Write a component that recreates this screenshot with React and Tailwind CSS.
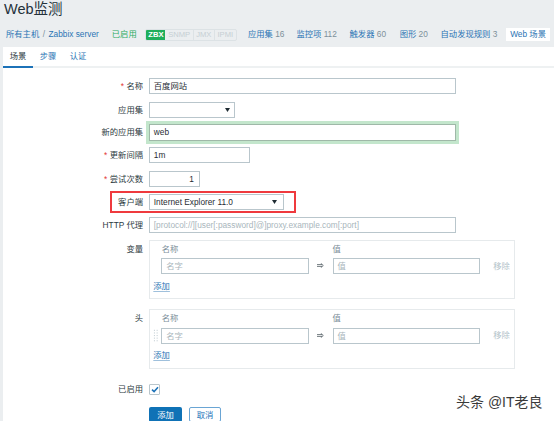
const BLUE = "text-[#2a74b4]";

function Caret() {
  return (
    <svg width="5" height="4" viewBox="0 0 5 4" className="shrink-0">
      <polygon points="0,0 5,0 2.5,4" fill="#1f2c33" />
    </svg>
  );
}

function Row({ label, required, className, children }) {
  return (
    <div className={"flex items-start " + className}>
      <div className="w-[140px] shrink-0 text-right h-[16px] leading-[16px] text-[#2c3a41]">
        {required && <span className="text-[#e33734] mr-[2.5px]">*</span>}
        {label}
      </div>
      <div className="ml-[6.3px]">{children}</div>
    </div>
  );
}

function Box({ label, className, withHandle }) {
  return (
    <div className={"flex items-start " + className}>
      <div className="w-[140px] shrink-0 text-right h-[18px] leading-[18px] text-[#2c3a41]">{label}</div>
      <div className="ml-[6.3px] w-[365.4px] border border-[#e6eaec] pl-[3px] pb-[4.3px]">
        <div className="flex h-[16px] leading-[16px] text-[#7b8e98]">
          <div className="w-[8px]" />
          <div className="w-[147.7px] pl-[0.5px]">名称</div>
          <div className="w-[23.6px]" />
          <div>值</div>
        </div>
        <div className={"flex items-center h-[16px] " + (withHandle ? "mt-[1.4px]" : "mt-[1px]")}>
          <div className="w-[8px] flex items-center">
            {withHandle && (
              <svg width="5" height="13" viewBox="0 0 5 13">
                {[0.8, 3.4, 6, 8.6, 11.2].map((y) =>
                  [0.9, 3.6].map((x) => <rect key={x + "-" + y} x={x} y={y} width="1.1" height="1.1" fill="#c9d3d8" />)
                )}
              </svg>
            )}
          </div>
          <div className="w-[147.7px] h-[16px] border border-[#b9c6cc] pl-[4px] leading-[14px] text-[#a9b6bc]">名字</div>
          <div className="w-[23.6px] flex justify-center">
            <svg width="7" height="5" viewBox="0 0 7 5">
              <path d="M0 1.6 H5 M0 3.4 H5 M3.8 0.3 L6.3 2.5 L3.8 4.7" fill="none" stroke="#4f5b61" strokeWidth="0.8" />
            </svg>
          </div>
          <div className="w-[147px] h-[16px] border border-[#b9c6cc] pl-[4px] leading-[14px] text-[#a9b6bc]">值</div>
          <div className="ml-[13.7px] text-[#b3c2c9]">移除</div>
        </div>
        <div className={"h-[15px] leading-[15px] " + (withHandle ? "mt-[4.8px]" : "mt-[5px]")}>
          <span className={BLUE + " underline underline-offset-[2px] decoration-[#9fc0dc]"}>添加</span>
        </div>
      </div>
    </div>
  );
}

function Badge({ children, className }) {
  return (
    <span className={"h-[10px] flex items-center justify-center text-[7.6px] leading-none " + className}>{children}</span>
  );
}

function NavItem({ name, count, className }) {
  return (
    <span className={"whitespace-nowrap " + className}>
      <span className={BLUE}>{name}</span>
      <span className="text-[#7d909a]"> {count}</span>
    </span>
  );
}

export default function App() {
  return (
    <div className="relative w-[554px] h-[421px] overflow-hidden bg-[#ebeef0] text-[#1f2c33] text-[8.3px] font-['Liberation_Sans','Noto_Sans_CJK_SC',sans-serif]">
      <div className="h-[22px] pl-[4px] pt-[1.5px] text-[14.5px] leading-[14px] text-[#24313a]">Web监测</div>
      <nav className="h-[25px] flex items-center pl-[6px] leading-none whitespace-nowrap">
        <span className={BLUE}>所有主机</span>
        <span className="text-[#7d909a] mx-[3.5px]">/</span>
        <span className={BLUE}>Zabbix server</span>
        <span className="ml-[13px] text-[#2eac62]">已启用</span>
        <div className="ml-[8.7px] flex rounded-[2px] overflow-hidden border border-[#dce2e5]">
          <Badge className="w-[19px] bg-[#1fae5b] text-white font-bold">ZBX</Badge>
          <Badge className="w-[28.6px] text-[#c6cfd4] border-r border-[#dce2e5]">SNMP</Badge>
          <Badge className="w-[20.7px] text-[#c6cfd4] border-r border-[#dce2e5]">JMX</Badge>
          <Badge className="w-[21.3px] text-[#c6cfd4]">IPMI</Badge>
        </div>
        <NavItem name="应用集" count="16" className="ml-[11px]" />
        <NavItem name="监控项" count="112" className="ml-[12px]" />
        <NavItem name="触发器" count="60" className="ml-[12.7px]" />
        <NavItem name="图形" count="20" className="ml-[13.7px]" />
        <NavItem name="自动发现规则" count="3" className="ml-[12.7px]" />
        <span className={"ml-[8.4px] bg-white h-[13px] px-[4.5px] flex items-center " + BLUE}>Web 场景</span>
      </nav>

      <div className="ml-[3px] bg-white h-[374px]">
        <div className="h-[21px] flex border-b-2 border-[#eef1f2]">
          <div className="w-[30px] flex items-center justify-center border-b-2 border-[#1c72b8] -mb-[2px] text-[#2c3a41]">场景</div>
          <div className={"w-[30px] flex items-center justify-center " + BLUE}>步骤</div>
          <div className={"w-[30px] flex items-center justify-center " + BLUE}>认证</div>
        </div>

        <div className="pt-[10px] flex flex-col">
          <Row label="名称" required className="">
            <div className="w-[306.7px] h-[16px] border border-[#b9c6cc] pl-[3.5px] leading-[14px]">百度网站</div>
          </Row>
          <Row label="应用集" className="mt-[7.7px]">
            <div className="w-[86px] h-[16px] border border-[#b9c6cc] flex items-center justify-end pr-[4.5px]">
              <Caret />
            </div>
          </Row>
          <Row label="新的应用集" className="mt-[6.3px]">
            <div className="w-[306.7px] h-[17px] border border-[#9fb8a8] ring-[3px] ring-[#c3e6cc] pl-[3.5px] leading-[15px]">web</div>
          </Row>
          <Row label="更新间隔" required className="mt-[6.3px]">
            <div className="w-[101px] h-[16px] border border-[#b9c6cc] pl-[3.5px] leading-[14px]">1m</div>
          </Row>
          <Row label="尝试次数" required className="mt-[7.4px]">
            <div className="w-[50.7px] h-[16px] border border-[#b9c6cc] pr-[5px] text-right leading-[14px]">1</div>
          </Row>
          <Row label="客户端" className="mt-[7.3px] relative">
            <div className="w-[134.4px] h-[16.5px] border border-[#b9c6cc] pl-[3.5px] pr-[6px] flex items-center justify-between">
              <span>Internet Explorer 11.0</span>
              <Caret />
            </div>
            <div className="absolute left-[107.3px] top-[-3px] w-[186px] h-[22.3px] border-2 border-[#ef3a3e] pointer-events-none" />
          </Row>
          <Row label="HTTP 代理" className="mt-[6.2px]">
            <div className="w-[306.7px] h-[16px] border border-[#b9c6cc] pl-[3.5px] leading-[14px] text-[#a9b6bc] whitespace-nowrap overflow-hidden">
              [protocol://][user[:password]@]proxy.example.com[:port]
            </div>
          </Row>
          <Box label="变量" className="mt-[7.3px]" />
          <Box label="头" className="mt-[10px]" withHandle />
          <Row label="已启用" className="mt-[12.7px]">
            <div className="h-[16px] flex items-center">
              <div className="w-[11px] h-[11px] border border-[#b9c6cc] rounded-[1px] flex items-center justify-center">
                <svg width="8" height="7" viewBox="0 0 8 7">
                  <path d="M1 3.6 L3.1 5.6 L7 1.2" fill="none" stroke="#1c72b8" strokeWidth="1.5" />
                </svg>
              </div>
            </div>
          </Row>
          <div className="flex mt-[10px] pl-[146.3px]">
            <div className="w-[32.4px] h-[15px] bg-[#0f72b6] text-white rounded-[2px] flex items-center justify-center">添加</div>
            <div className="ml-[7.3px] w-[32px] h-[15px] bg-white border border-[#6aa5d4] text-[#1c72b8] rounded-[2px] flex items-center justify-center">取消</div>
          </div>
        </div>
      </div>

      <div className="absolute left-[456px] top-[393px] text-[14px] leading-[18px] text-[#3a3a3a] whitespace-nowrap">头条 @IT老良</div>
    </div>
  );
}
